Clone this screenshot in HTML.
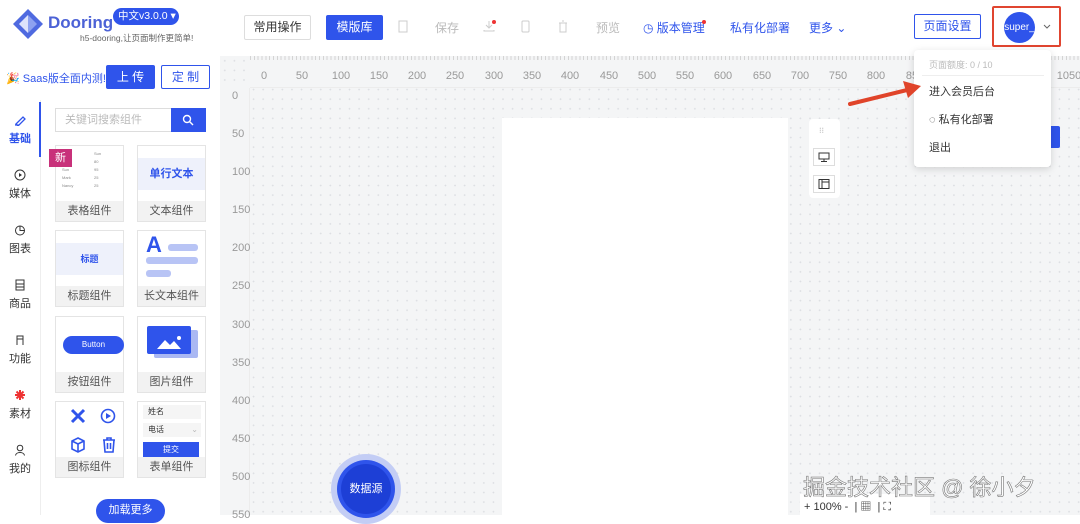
<!DOCTYPE html>
<html><head><meta charset="utf-8">
<style>
*{margin:0;padding:0;box-sizing:border-box}
body{width:1080px;height:515px;overflow:hidden;position:relative;background:#fff;font-family:"Liberation Sans","Noto Sans CJK SC",sans-serif;color:#333}
.a{position:absolute}
.blue{color:#2f54eb}
.btn{position:absolute;font-size:12px;text-align:center;border-radius:2px}
.canvasbg{position:absolute;left:220px;top:56px;width:860px;height:459px;background-color:#f4f5f6;background-image:radial-gradient(circle,#dcdee2 0.7px,transparent 1px);background-size:9.6px 9.6px}
.rt{position:absolute;top:70px;font-size:11px;color:#999;transform:translateX(-50%)}
.rl{position:absolute;left:232px;font-size:11px;color:#999;transform:translateY(-50%)}
.nav{position:absolute;left:0;width:40px;text-align:center;font-size:11px;color:#333}
.nav svg{display:block;margin:0 auto 4px}
.card{position:absolute;width:69px;height:77px;border:1px solid #e4e4e4;background:#fff}
.card .lb{position:absolute;left:0;right:0;bottom:0;height:20px;background:#f2f2f2;font-size:11px;color:#555;text-align:center;line-height:20px}
</style></head><body>

<svg class="a" style="left:12px;top:8px" width="32" height="32" viewBox="0 0 32 32"><path d="M16 1 L31 16 L16 31 L1 16Z" fill="#4f6ae0"/><path d="M16 7 L25 16 L16 25 L7 16Z" fill="#8ea2f0"/><path d="M16 7 L16 25 L7 16Z" fill="#fff" opacity=".7"/></svg>
<div class="a" style="left:48px;top:13px;font-size:17px;font-weight:bold;color:#4c62d6">Dooring</div>
<div class="a" style="left:113px;top:8px;width:66px;height:17px;border-radius:9px;background:#2f54eb;color:#fff;font-size:10.5px;line-height:17px;padding-left:5px">中文v3.0.0 ▾</div>
<div class="a" style="left:80px;top:32px;font-size:8.5px;color:#666">h5-dooring,让页面制作更简单!</div>

<div class="btn" style="left:244px;top:15px;width:67px;height:25px;border:1px solid #ddd;line-height:23px;color:#333">常用操作</div>
<div class="btn" style="left:326px;top:15px;width:57px;height:25px;background:#2f54eb;color:#fff;line-height:25px">模版库</div>
<svg class="a" style="left:398px;top:20px" width="10" height="13"><rect x="1" y="1" width="8" height="11" fill="none" stroke="#ccc"/></svg>
<div class="a" style="left:435px;top:19px;font-size:12px;color:#bbb">保存</div>
<svg class="a" style="left:483px;top:20px" width="12" height="12"><path d="M6 1 V8 M3 5 L6 8 L9 5 M1 10 V11 H11 V10" fill="none" stroke="#ccc"/></svg><div class="a" style="left:492px;top:20px;width:4px;height:4px;border-radius:2px;background:#e33"></div>
<svg class="a" style="left:521px;top:20px" width="9" height="13"><rect x="1" y="1" width="7" height="11" rx="1" fill="none" stroke="#ccc"/></svg>
<svg class="a" style="left:558px;top:20px" width="10" height="13"><path d="M1 3 H9 M2 3 V12 H8 V3 M4 1 H6" fill="none" stroke="#ccc"/></svg>
<div class="a" style="left:596px;top:19px;font-size:12px;color:#bbb">预览</div>
<div class="a blue" style="left:643px;top:19px;font-size:12px">◷ 版本管理</div><div class="a" style="left:702px;top:20px;width:4px;height:4px;border-radius:2px;background:#e33"></div>
<div class="a blue" style="left:730px;top:19px;font-size:12px">私有化部署</div>
<div class="a blue" style="left:809px;top:19px;font-size:12px">更多 ⌄</div>
<div class="btn" style="left:914px;top:14px;width:67px;height:25px;border:1px solid #2f54eb;color:#2f54eb;line-height:23px">页面设置</div>
<div class="a" style="left:992px;top:6px;width:69px;height:41px;border:2px solid #e04530;border-radius:2px"></div>
<div class="a" style="left:1004px;top:12px;width:31px;height:31px;border-radius:50%;background:#2f54eb;color:#fff;font-size:10px;line-height:31px;text-align:center;overflow:hidden">super_</div>
<svg class="a" style="left:1043px;top:24px" width="8" height="6"><path d="M1 1 L4 4 L7 1" fill="none" stroke="#666"/></svg>

<div class="a" style="left:0;top:52px;width:220px;height:48px;background:#fff"></div>
<div class="a" style="left:6px;top:70px;font-size:11px;color:#2f54eb">🎉 Saas版全面内测!</div>
<div class="btn" style="left:106px;top:65px;width:49px;height:24px;background:#2f54eb;color:#fff;line-height:24px;font-size:12px">上 传</div>
<div class="btn" style="left:161px;top:65px;width:49px;height:24px;border:1px solid #2f54eb;color:#2f54eb;line-height:22px">定 制</div>

<div class="a" style="left:40px;top:100px;width:1px;height:415px;background:#eee"></div>
<div class="a" style="left:39px;top:102px;width:2px;height:55px;background:#2f54eb"></div>
<div class="nav" style="top:114px;font-weight:bold;color:#2f54eb"><svg width="12" height="12"><path d="M2 10 L9 3 L11 5 L4 12Z M1 11 H5" fill="none" stroke="#2f54eb" stroke-width="1.3"/></svg>基础</div>
<div class="nav" style="top:169px"><svg width="12" height="12"><circle cx="6" cy="6" r="5" fill="none" stroke="#333"/><path d="M5 4 L8 6 L5 8Z" fill="#333"/></svg>媒体</div>
<div class="nav" style="top:224px"><svg width="12" height="12"><circle cx="6" cy="6.5" r="4.5" fill="none" stroke="#333"/><path d="M6 2 V6.5 H10.5" fill="none" stroke="#333"/></svg>图表</div>
<div class="nav" style="top:279px"><svg width="12" height="12"><rect x="2" y="1" width="8" height="10" fill="none" stroke="#333"/><path d="M2 5 H10 M2 8 H10" stroke="#333"/></svg>商品</div>
<div class="nav" style="top:334px"><svg width="12" height="12"><path d="M3 11 V2 H9 V11 M3 5 H9" fill="none" stroke="#333"/></svg>功能</div>
<div class="nav" style="top:389px"><svg width="12" height="12"><path d="M6 1 V11 M1 6 H11 M2.5 2.5 L9.5 9.5 M9.5 2.5 L2.5 9.5" stroke="#e33" stroke-width="2"/></svg>素材</div>
<div class="nav" style="top:444px"><svg width="12" height="12"><circle cx="6" cy="4" r="2.8" fill="none" stroke="#333"/><path d="M1.5 11.5 C2 7.5 10 7.5 10.5 11.5" fill="none" stroke="#333"/></svg>我的</div>

<div class="a" style="left:55px;top:108px;width:117px;height:24px;border:1px solid #ddd;font-size:11px;color:#bbb;line-height:22px;padding-left:9px">关键词搜索组件</div>
<div class="a" style="left:171px;top:108px;width:35px;height:24px;background:#2f54eb"></div>
<svg class="a" style="left:182px;top:114px" width="12" height="12"><circle cx="5" cy="5" r="3.5" fill="none" stroke="#fff" stroke-width="1.4"/><path d="M7.5 7.5 L11 11" stroke="#fff" stroke-width="1.4"/></svg>

<div class="card" style="left:55px;top:145px">
 <div class="a" style="left:6px;top:4px;width:58px;height:48px;font-size:4px;color:#888;line-height:8px">&nbsp;<br>&nbsp;<br>Sun<br>Mark<br>Nancy</div>
 <div class="a" style="left:38px;top:4px;font-size:4px;line-height:8px;color:#888">Sun<br>80<br>95<br>25<br>25</div>
 <div class="lb">表格组件</div></div>
<div class="a" style="left:49px;top:149px;width:23px;height:18px;background:#c8317a;color:#fff;font-size:11px;text-align:center;line-height:18px">新</div>
<div class="card" style="left:137px;top:145px"><div class="a" style="left:0;top:12px;width:67px;height:32px;background:#eef1fb;color:#2f54eb;font-weight:bold;font-size:11px;text-align:center;line-height:32px">单行文本</div><div class="lb">文本组件</div></div>
<div class="card" style="left:55px;top:230px"><div class="a" style="left:0;top:12px;width:67px;height:32px;background:#eef1fb;color:#2f54eb;font-weight:bold;font-size:9px;text-align:center;line-height:32px">标题</div><div class="lb">标题组件</div></div>
<div class="card" style="left:137px;top:230px">
 <div class="a" style="left:8px;top:1px;font-size:22px;font-weight:bold;color:#2f54eb">A</div>
 <div class="a" style="left:30px;top:13px;width:30px;height:7px;border-radius:3px;background:#b8c4f5"></div>
 <div class="a" style="left:8px;top:26px;width:52px;height:7px;border-radius:3px;background:#b8c4f5"></div>
 <div class="a" style="left:8px;top:39px;width:25px;height:7px;border-radius:3px;background:#b8c4f5"></div>
 <div class="lb">长文本组件</div></div>
<div class="card" style="left:55px;top:316px"><div class="a" style="left:7px;top:19px;width:61px;height:18px;border-radius:9px;background:#2f54eb;color:#fff;font-size:8px;text-align:center;line-height:18px">Button</div><div class="lb">按钮组件</div></div>
<div class="card" style="left:137px;top:316px">
 <div class="a" style="left:16px;top:13px;width:44px;height:28px;border-radius:2px;background:#aab8f3"></div>
 <div class="a" style="left:9px;top:9px;width:44px;height:28px;border-radius:2px;background:#2f54eb"></div>
 <svg class="a" style="left:17px;top:18px" width="28" height="16"><path d="M2 14 L10 5 L15 10 L19 6 L26 14Z" fill="#fff"/><circle cx="24" cy="3" r="2" fill="#fff"/></svg>
 <div class="lb">图片组件</div></div>
<div class="card" style="left:55px;top:401px">
 <svg class="a" style="left:14px;top:6px" width="16" height="16"><path d="M2 2 L14 14 M14 2 L2 14" stroke="#2f54eb" stroke-width="3"/></svg>
 <svg class="a" style="left:44px;top:6px" width="16" height="16"><circle cx="8" cy="8" r="6.5" fill="none" stroke="#2f54eb" stroke-width="1.6"/><path d="M6 5 L11 8 L6 11Z" fill="#2f54eb"/></svg>
 <svg class="a" style="left:14px;top:35px" width="16" height="16"><path d="M8 1 L14 4 V12 L8 15 L2 12 V4Z M2 4 L8 7 L14 4 M8 7 V15" fill="none" stroke="#2f54eb" stroke-width="1.6"/></svg>
 <svg class="a" style="left:45px;top:35px" width="16" height="16"><path d="M2 3 H14 M6 3 V1 H10 V3 M3 3 L4 15 H12 L13 3 M6.5 6 V12 M9.5 6 V12" fill="none" stroke="#2f54eb" stroke-width="1.6"/></svg>
 <div class="lb">图标组件</div></div>
<div class="card" style="left:137px;top:401px">
 <div class="a" style="left:5px;top:3px;width:58px;height:14px;background:#f5f5f5;font-size:8px;padding-left:5px;line-height:14px">姓名</div>
 <div class="a" style="left:5px;top:21px;width:58px;height:14px;background:#f5f5f5;font-size:8px;padding-left:5px;line-height:14px">电话 <span style="float:right;color:#bbb;margin-right:3px">⌄</span></div>
 <div class="a" style="left:5px;top:40px;width:56px;height:15px;background:#2f54eb;color:#fff;font-size:8px;text-align:center;line-height:15px">提交</div>
 <div class="lb">表单组件</div></div>
<div class="a" style="left:96px;top:499px;width:69px;height:24px;border-radius:12px;background:#2f54eb;color:#fff;font-size:11px;text-align:center;line-height:22px">加载更多</div>

<div class="canvasbg"></div>
<div class="a" style="left:250px;top:56px;width:830px;height:32px;background:#f4f5f6;border-bottom:1px solid #ececec;background-image:repeating-linear-gradient(90deg,#d4d4d4 0 1px,transparent 1px 3.83px);background-size:100% 4px;background-repeat:no-repeat"></div>
<div class="a" style="left:220px;top:88px;width:30px;height:427px;background:#f4f5f6;border-right:1px solid #ececec"></div>
<div class="rt" style="left:264px">0</div><div class="rt" style="left:302px">50</div><div class="rt" style="left:341px">100</div><div class="rt" style="left:379px">150</div><div class="rt" style="left:417px">200</div><div class="rt" style="left:455px">250</div><div class="rt" style="left:494px">300</div><div class="rt" style="left:532px">350</div><div class="rt" style="left:570px">400</div><div class="rt" style="left:609px">450</div><div class="rt" style="left:647px">500</div><div class="rt" style="left:685px">550</div><div class="rt" style="left:723px">600</div><div class="rt" style="left:762px">650</div><div class="rt" style="left:800px">700</div><div class="rt" style="left:838px">750</div><div class="rt" style="left:876px">800</div><div class="rt" style="left:915px">850</div><div class="rt" style="left:1069px">1050</div>
<div class="rl" style="top:96px">0</div><div class="rl" style="top:134px">50</div><div class="rl" style="top:172px">100</div><div class="rl" style="top:210px">150</div><div class="rl" style="top:248px">200</div><div class="rl" style="top:286px">250</div><div class="rl" style="top:325px">300</div><div class="rl" style="top:363px">350</div><div class="rl" style="top:401px">400</div><div class="rl" style="top:439px">450</div><div class="rl" style="top:477px">500</div><div class="rl" style="top:515px">550</div>

<div class="a" style="left:502px;top:118px;width:286px;height:397px;background:#fff"></div>

<div class="a" style="left:809px;top:119px;width:31px;height:79px;background:#fff;border-radius:4px"></div>
<div class="a" style="left:819px;top:126px;font-size:8px;color:#aaa">⁝⁝</div>
<div class="a" style="left:813px;top:148px;width:22px;height:18px;border:1px solid #ddd"></div>
<svg class="a" style="left:818px;top:152px" width="12" height="10"><rect x="1" y="1" width="10" height="6" fill="none" stroke="#333"/><path d="M6 7 V9 M3 9.5 H9" stroke="#333"/></svg>
<div class="a" style="left:813px;top:175px;width:22px;height:18px;border:1px solid #ddd"></div>
<svg class="a" style="left:818px;top:179px" width="12" height="10"><rect x="1" y="0.5" width="10" height="9" fill="none" stroke="#333"/><path d="M4 0.5 V9.5 M4 3 H11" stroke="#333"/></svg>
<div class="a" style="left:1040px;top:126px;width:20px;height:22px;background:#2f54eb;border-radius:2px"></div>

<div class="a" style="left:331px;top:454px;width:70px;height:70px;border-radius:50%;background:#c3cdf5"></div>
<div class="a" style="left:337px;top:460px;width:58px;height:58px;border-radius:50%;background:#2f54eb"></div>
<div class="a" style="left:341px;top:464px;width:50px;height:50px;border-radius:50%;background:#1d3fd6;color:#fff;font-size:11px;text-align:center;line-height:50px">数据源</div>

<div class="a" style="left:800px;top:494px;width:130px;height:21px;background:#fff"></div>
<div class="a" style="left:804px;top:498px;font-size:11px;color:#333">+ 100% - &nbsp;| ▦ &nbsp;| ⛶</div>
<div class="a" style="left:803px;top:470px;font-size:22px;color:#fff;-webkit-text-stroke:0.6px #777;">掘金技术社区 @ 徐小夕</div>

<div class="a" style="left:914px;top:50px;width:137px;height:117px;background:#fff;border-radius:4px;box-shadow:0 2px 8px rgba(0,0,0,.15)"></div>
<div class="a" style="left:929px;top:58px;font-size:9px;color:#bbb">页面额度: 0 / 10</div>
<div class="a" style="left:922px;top:75px;width:122px;height:1px;background:#eee"></div>
<div class="a" style="left:929px;top:83px;font-size:11px;color:#333">进入会员后台</div>
<div class="a" style="left:929px;top:111px;font-size:11px;color:#333">◌ 私有化部署</div>
<div class="a" style="left:929px;top:139px;font-size:11px;color:#333">退出</div>

<svg class="a" style="left:845px;top:78px" width="80" height="30"><path d="M5 26 L62 12" stroke="#e0442a" stroke-width="4" stroke-linecap="round"/><path d="M58 3 L76 8 L63 20Z" fill="#e0442a"/></svg>
</body></html>
